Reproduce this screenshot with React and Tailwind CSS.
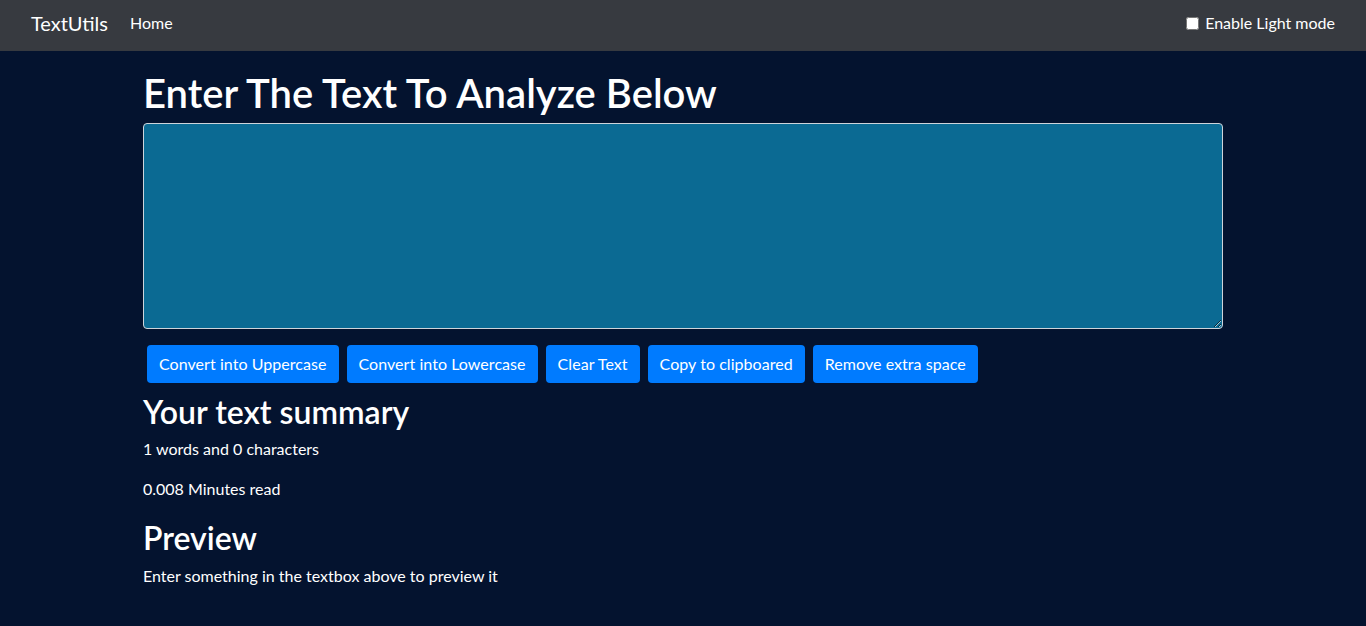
import React, { useState } from 'react';

const buttons = [
  'Convert into Uppercase',
  'Convert into Lowercase',
  'Clear Text',
  'Copy to clipboared',
  'Remove extra space',
];

const App = () => {
  const [text, setText] = useState('');
  const [light, setLight] = useState(false);

  const words = text.split(' ').length;
  const chars = text.length;

  return (
    <div className="min-h-[626px] bg-[#04132f] text-white font-['Lato','Liberation_Sans',sans-serif]">
      {/* Navbar */}
      <nav className="h-[51px] bg-[#373a40] flex items-center justify-between pl-[31px] pr-[31px] pb-[5px]">
        <div className="flex items-center">
          <a className="text-[20px] leading-[30px] text-white">TextUtils</a>
          <a className="ml-[22px] text-[16px] text-white">Home</a>
        </div>
        <label className="flex items-center text-[16px] text-white">
          <input
            type="checkbox"
            checked={light}
            onChange={() => setLight(!light)}
            className="w-[13px] h-[13px] mr-[6px] accent-white"
          />
          Enable Light mode
        </label>
      </nav>

      <div className="w-[1080px] mx-auto pt-[18px]">
        <h1 className="text-[40px] leading-[48px] font-semibold mb-[6px]">Enter The Text To Analyze Below</h1>
        <textarea
          value={text}
          onChange={(e) => setText(e.target.value)}
          rows={8}
          className="block w-full h-[206px] bg-[#0b6a93] border border-[#ced4da] rounded-[4px] text-white px-3 py-1.5 outline-none"
        />
        <div className="flex gap-[8px] mt-[16px] pl-[4px]">
          {buttons.map((b) => (
            <button key={b} className="h-[38px] px-[12px] bg-[#007bff] rounded-[4px] text-[16px] tracking-[0.05px] text-white">
              {b}
            </button>
          ))}
        </div>

        <h2 className="text-[32px] leading-[38px] font-semibold mt-[10px] mb-[6px]">Your text summary</h2>
        <p className="text-[16px] leading-[24px] mb-[16px]">{words} words and {chars} characters</p>
        <p className="text-[16px] leading-[24px] mb-[18px]">{0.008 * words} Minutes read</p>
        <h2 className="text-[32px] leading-[38px] font-semibold mb-[7px]">Preview</h2>
        <p className="text-[16px] leading-[24px]">
          {text.length > 0 ? text : 'Enter something in the textbox above to preview it'}
        </p>
      </div>
    </div>
  );
};

export default App;
